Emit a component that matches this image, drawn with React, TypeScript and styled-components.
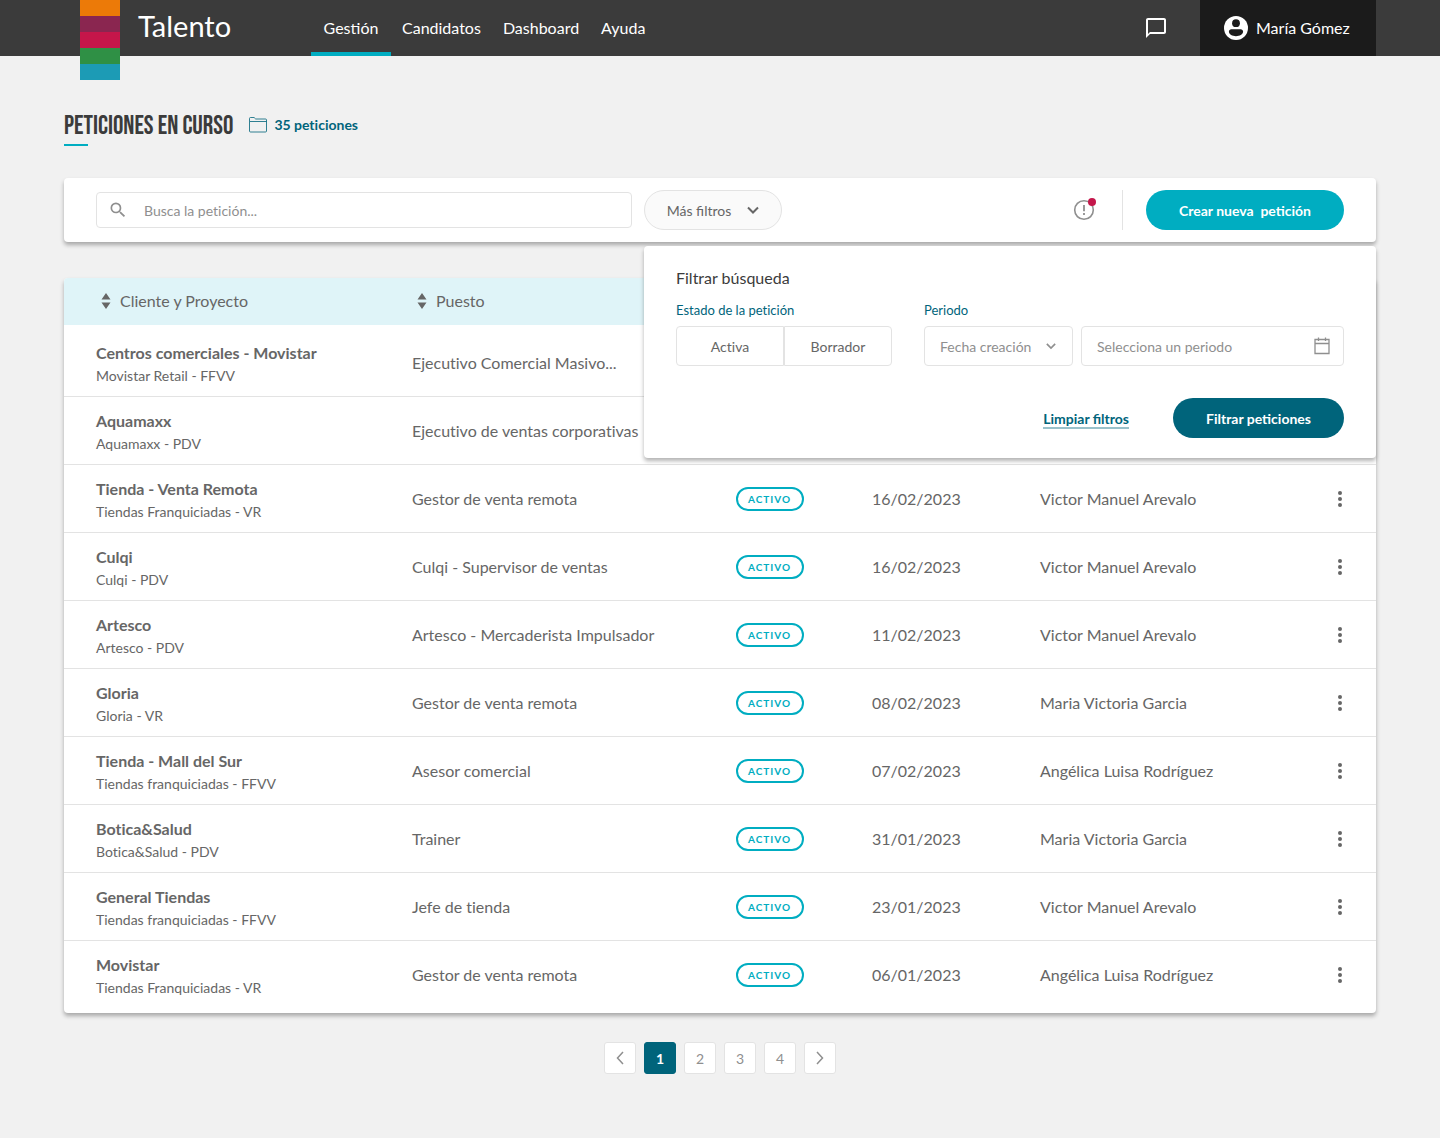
import React from "react";
import styled, { createGlobalStyle, css } from "styled-components";
import { MdChatBubbleOutline, MdSearch } from "react-icons/md";

const color = {
  page: "#f1f1f1",
  bar: "#3b3b3b",
  barDark: "#1b1b1b",
  text: "#666666",
  strong: "#3b3b3b",
  muted: "#8f8f8f",
  line: "#e3e3e3",
  teal: "#00adc1",
  petrol: "#00647b",
  tint: "#dff4f8",
  alert: "#c4174b",
};

const GlobalStyle = createGlobalStyle`
  *, *::before, *::after { box-sizing: border-box; }
  body {
    margin: 0;
    background: ${color.page};
    color: ${color.text};
    font-family: Lato, "Open Sans", sans-serif;
    font-size: 16px;
    line-height: 24px;
    font-variant-ligatures: none;
  }
  button, input, select { font: inherit; color: inherit; }
  button { cursor: pointer; }
`;

const raised = css`
  background: #fff;
  border-radius: 4px;
  box-shadow: 0 3px 4px rgba(0, 0, 0, 0.3);
`;

const ligatures = css`
  font-variant-ligatures: normal;
`;

const TopBar = styled.header`
  ${ligatures}
  display: flex;
  height: 56px;
  padding: 0 64px 0 80px;
  background: ${color.bar};
  color: #fff;
`;

const Brand = styled.a`
  display: flex;
  align-items: flex-start;
  gap: 18px;
  width: 231px;
  color: inherit;
  text-decoration: none;
`;

const Flag = styled.span`
  display: flex;
  flex-direction: column;
  flex: none;
  width: 40px;
`;

const Stripe = styled.span<{ $tone: string }>`
  height: 16px;
  background: ${(p) => p.$tone};
`;

const BrandName = styled.span`
  font-size: 29px;
  line-height: 52px;
`;

const MainNav = styled.nav`
  display: flex;
  flex: 1;
`;

const NavLink = styled.a<{ $active?: boolean }>`
  display: flex;
  align-items: center;
  justify-content: center;
  padding: 4px 11px 0;
  color: inherit;
  text-decoration: none;
  border-bottom: 4px solid transparent;
  ${(p) => p.$active && css`min-width: 80px; border-color: ${color.teal};`}
`;

const PlainButton = styled.button`
  display: inline-flex;
  align-items: center;
  justify-content: center;
  padding: 0;
  border: 0;
  background: none;
`;

const Messages = styled(PlainButton)`
  width: 24px;
  margin-right: 32px;
`;

const Account = styled(PlainButton)`
  justify-content: flex-start;
  gap: 8px;
  min-width: 176px;
  padding: 0 24px;
  background: ${color.barDark};
`;

const Page = styled.main`
  padding: 56px 64px 64px;
`;

const Heading = styled.div`
  display: flex;
  align-items: center;
  gap: 16px;
  height: 34px;
  margin-bottom: 32px;
`;

const Title = styled.h1`
  display: flex;
  flex-direction: column;
  gap: 2px;
  margin: 0;
  color: ${color.strong};
  font: 400 26px/30px "Bebas Neue", "Roboto Condensed", "Liberation Sans Narrow", sans-serif;
  text-transform: uppercase;
  white-space: nowrap;

  &::after {
    content: "";
    width: 24px;
    height: 2px;
    background: ${color.teal};
  }
`;

const Count = styled.p`
  display: flex;
  align-items: center;
  gap: 7px;
  margin: 0;
  padding-bottom: 8px;
  color: ${color.petrol};
  font-size: 14px;
  font-weight: 700;
`;

const Toolbar = styled.section`
  ${raised}
  position: relative;
  z-index: 1;
  display: flex;
  align-items: center;
  padding: 12px 32px;
  margin-bottom: 36px;
`;

const SearchBox = styled.label`
  display: flex;
  align-items: center;
  flex: 0 1 536px;
  gap: 16px;
  height: 36px;
  padding: 0 11px;
  margin-right: 12px;
  border: 1px solid ${color.line};
  border-radius: 4px;
  color: ${color.muted};
`;

const Field = styled.input`
  flex: 1;
  min-width: 0;
  padding: 2px 0 0;
  border: 0;
  outline: 0;
  background: none;
  font-size: 14px;
  &::placeholder { color: ${color.muted}; opacity: 1; }
`;

const MoreFilters = styled.button`
  ${ligatures}
  display: flex;
  align-items: center;
  justify-content: center;
  gap: 16px;
  width: 138px;
  height: 40px;
  padding: 0;
  border: 1px solid ${color.line};
  border-radius: 20px;
  background: #fafafa;
  font-size: 14px;
`;

const ButtonText = styled.span`
  padding-top: 2px;
`;

const Alerts = styled(PlainButton)`
  margin-left: auto;
`;

const Divider = styled.span`
  width: 1px;
  height: 40px;
  margin: 0 23px 0 25px;
  background: ${color.line};
`;

const PillButton = styled.button<{ $tone: string }>`
  ${ligatures}
  height: 40px;
  padding: 2px 33px 0;
  border: 0;
  border-radius: 20px;
  background: ${(p) => p.$tone};
  color: #fff;
  font-size: 14px;
  font-weight: 700;
  white-space: pre;
`;

const FilterPanel = styled.form`
  ${raised}
  position: absolute;
  top: calc(100% + 4px);
  right: 0;
  width: 732px;
  max-width: 100%;
  padding: 20px 32px;
`;

const PanelTitle = styled.h2`
  margin: 0;
  color: ${color.strong};
  font-size: 16px;
  font-weight: 400;
`;

const FilterRow = styled.div`
  display: flex;
  gap: 32px;
  margin: 10px 0 32px;
`;

const Group = styled.fieldset<{ $grow?: boolean }>`
  flex: ${(p) => (p.$grow ? "1" : "0 0 216px")};
  min-width: 0;
  margin: 0;
  padding: 0;
  border: 0;
`;

const Legend = styled.legend`
  padding: 0 0 6px;
  color: ${color.petrol};
  font-size: 13px;
  line-height: 20px;
`;

const Controls = styled.div`
  display: flex;
  gap: 8px;
`;

const Segments = styled.div`
  display: flex;
`;

const Segment = styled.button`
  flex: 1;
  height: 40px;
  padding: 2px 0 0;
  border: 1px solid ${color.line};
  background: #fff;
  font-size: 14px;
  &:first-child { border-radius: 4px 0 0 4px; }
  &:last-child { border-radius: 0 4px 4px 0; }
`;

const boxed = css`
  display: flex;
  align-items: center;
  height: 40px;
  border: 1px solid ${color.line};
  border-radius: 4px;
  color: ${color.muted};
  font-size: 14px;
`;

const SelectBox = styled.label`
  ${boxed}
  flex: 0 0 149px;
  padding: 0 16px 0 15px;
`;

const Select = styled.select`
  appearance: none;
  flex: 1;
  min-width: 0;
  padding: 2px 0 0;
  border: 0;
  outline: 0;
  background: none;
`;

const DateBox = styled.label`
  ${boxed}
  flex: 1;
  padding: 0 12px 0 15px;
`;

const PanelActions = styled.div`
  display: flex;
  align-items: center;
  justify-content: flex-end;
  gap: 44px;
`;

const ClearLink = styled.a`
  ${ligatures}
  margin-top: 2px;
  border-bottom: 2px solid #99c1ca;
  color: ${color.petrol};
  font-size: 14px;
  font-weight: 700;
  line-height: 17px;
  text-decoration: none;
`;

const TableCard = styled.section`
  ${raised}
  padding-bottom: 4px;
`;

const Table = styled.table`
  width: 100%;
  border-collapse: separate;
  border-spacing: 0;
  table-layout: fixed;
  text-align: left;
`;

const Col = styled.col<{ $width?: number }>`
  ${(p) => p.$width && `width: ${p.$width}px;`}
`;

const HeadCell = styled.th`
  height: 47px;
  padding: 0;
  background: ${color.tint};
  font-weight: 400;
  &:first-child { padding-left: 32px; border-top-left-radius: 4px; }
  &:last-child { border-top-right-radius: 4px; }
`;

const SortButton = styled(PlainButton)`
  gap: 8px;
  padding-left: 4px;
`;

const Row = styled.tr``;

const Cell = styled.td`
  height: 68px;
  padding: 0;
  border-bottom: 1px solid ${color.line};
  white-space: nowrap;
  &:first-child { padding: 2px 0 0 32px; }
  &:last-child { padding-right: 26px; text-align: right; }
  ${Row}:first-child & { height: 72px; padding-top: 4px; }
  ${Row}:first-child &:first-child { padding-top: 6px; }
  ${Row}:last-child & { border-bottom-color: transparent; }
`;

const Client = styled.strong`
  display: block;
  font-weight: 700;
`;

const Project = styled.span`
  display: block;
  font-size: 14px;
  line-height: 22px;
`;

const Badge = styled.span`
  display: inline-flex;
  align-items: center;
  height: 24px;
  padding: 0 11px 0 10px;
  border: 2px solid ${color.teal};
  border-radius: 12px;
  color: ${color.teal};
  font-size: 10px;
  font-weight: 700;
  letter-spacing: 1px;
  vertical-align: middle;
`;

const RowMenu = styled(PlainButton)`
  width: 20px;
  height: 24px;
  vertical-align: middle;
`;

const Pagination = styled.nav`
  display: flex;
  justify-content: center;
  gap: 8px;
  margin-top: 29px;
`;

const PageButton = styled.button<{ $active?: boolean }>`
  display: flex;
  align-items: center;
  justify-content: center;
  width: 32px;
  height: 32px;
  padding: 0;
  border: 1px solid ${(p) => (p.$active ? color.petrol : color.line)};
  border-radius: 3px;
  background: ${(p) => (p.$active ? color.petrol : "#fff")};
  color: ${(p) => (p.$active ? "#fff" : color.muted)};
  font-size: 14px;
  font-weight: ${(p) => (p.$active ? 700 : 400)};
`;

const UserIcon = () => (
  <svg width="24" height="24" viewBox="0 0 24 24" aria-hidden="true">
    <circle cx="12" cy="12" r="12" fill="#fff" />
    <circle cx="12" cy="7.2" r="3.9" fill={color.barDark} />
    <path d="M7.4 13.2h9.2c1.5 0 2.5 1 2.500 2.400 0 2.800-3.500 4.700-7.100 4.700s-7.100-1.900-7.100-4.700c0-1.400 1-2.400 2.500-2.400z" fill={color.barDark} />
  </svg>
);

const FolderIcon = () => (
  <svg width="18" height="16" viewBox="0 0 18 16" fill="none" stroke={color.petrol} aria-hidden="true">
    <path d="M.5 4.500V1.500a1 1 0 0 1 1-1h3.600l1.600 1.500h9.800a1 1 0 0 1 1 1V14a1 1 0 0 1-1 1h-15a1 1 0 0 1-1-1zM.5 4.500h17" opacity=".8" />
  </svg>
);

const Chevron = ({ size, weight }: { size: number; weight: number }) => (
  <svg width={size} height={size} viewBox="0 0 12 12" fill="none" stroke="currentColor" strokeWidth={weight} aria-hidden="true">
    <path d="M1 3.500 6 8.500 11 3.500" />
  </svg>
);

const AlertIcon = () => (
  <svg width="24" height="24" viewBox="0 0 24 24" fill="none" aria-hidden="true">
    <circle cx="11" cy="12" r="9.300" stroke={color.muted} strokeWidth="1.600" />
    <path d="M11 7v6.200M11 15v2" stroke={color.muted} strokeWidth="1.800" />
    <circle cx="19" cy="4" r="4" fill={color.alert} />
  </svg>
);

const CalendarIcon = () => (
  <svg width="18" height="20" viewBox="0 0 18 20" fill="none" stroke={color.muted} aria-hidden="true">
    <path d="M2 3.500h14v14H2zM2 7.500h14M5.500 1.500v3.500M12.500 1.500v3.500" strokeWidth="1.300" />
  </svg>
);

const SortIcon = () => (
  <svg width="12" height="16" viewBox="0 0 12 16" fill={color.text} aria-hidden="true">
    <path d="M6 0l4.500 6.500h-9zM6 16l4.500-6.500h-9z" />
  </svg>
);

const DotsIcon = () => (
  <svg width="4" height="16" viewBox="0 0 4 16" fill={color.text} aria-hidden="true">
    <circle cx="2" cy="2" r="2" />
    <circle cx="2" cy="8" r="2" />
    <circle cx="2" cy="14" r="2" />
  </svg>
);

const ArrowIcon = ({ next }: { next?: boolean }) => (
  <svg width="8" height="14" viewBox="0 0 8 14" fill="none" stroke="currentColor" strokeWidth="1.500" aria-hidden="true">
    <path d={next ? "M1 1l5.500 6L1 13" : "M7 1L1.500 7 7 13"} />
  </svg>
);

const stripes = ["#ec7a08", "#8a2650", "#c5164a", "#2f9045", "#1c9bb5"];
const sections = ["Gestión", "Candidatos", "Dashboard", "Ayuda"];

const victor = "Victor Manuel Arevalo";
const maria = "Maria Victoria Garcia";
const angelica = "Angélica Luisa Rodríguez";

type Request = { client: string; project: string; job: string; date?: string; owner?: string };

const requests: Request[] = [
  { client: "Centros comerciales - Movistar", project: "Movistar Retail - FFVV", job: "Ejecutivo Comercial Masivo..." },
  { client: "Aquamaxx", project: "Aquamaxx - PDV", job: "Ejecutivo de ventas corporativas" },
  { client: "Tienda - Venta Remota", project: "Tiendas Franquiciadas - VR", job: "Gestor de venta remota", date: "16/02/2023", owner: victor },
  { client: "Culqi", project: "Culqi - PDV", job: "Culqi - Supervisor de ventas", date: "16/02/2023", owner: victor },
  { client: "Artesco", project: "Artesco - PDV", job: "Artesco - Mercaderista Impulsador", date: "11/02/2023", owner: victor },
  { client: "Gloria", project: "Gloria - VR", job: "Gestor de venta remota", date: "08/02/2023", owner: maria },
  { client: "Tienda - Mall del Sur", project: "Tiendas franquiciadas - FFVV", job: "Asesor comercial", date: "07/02/2023", owner: angelica },
  { client: "Botica&Salud", project: "Botica&Salud - PDV", job: "Trainer", date: "31/01/2023", owner: maria },
  { client: "General Tiendas", project: "Tiendas franquiciadas - FFVV", job: "Jefe de tienda", date: "23/01/2023", owner: victor },
  { client: "Movistar", project: "Tiendas Franquiciadas - VR", job: "Gestor de venta remota", date: "06/01/2023", owner: angelica },
];

export default function App() {
  return (
    <>
      <GlobalStyle />
      <TopBar>
        <Brand href="#">
          <Flag>{stripes.map((tone) => <Stripe key={tone} $tone={tone} />)}</Flag>
          <BrandName>Talento</BrandName>
        </Brand>
        <MainNav>
          {sections.map((name, i) => (
            <NavLink key={name} href="#" $active={i === 0}>{name}</NavLink>
          ))}
        </MainNav>
        <Messages aria-label="Mensajes"><MdChatBubbleOutline size={24} /></Messages>
        <Account><UserIcon />María Gómez</Account>
      </TopBar>

      <Page>
        <Heading>
          <Title>Peticiones en curso</Title>
          <Count><FolderIcon />35 peticiones</Count>
        </Heading>

        <Toolbar>
          <SearchBox>
            <MdSearch size={20} />
            <Field type="search" aria-label="Buscar" placeholder="Busca la petición..." />
          </SearchBox>
          <MoreFilters aria-expanded="true">
            <ButtonText>Más filtros</ButtonText>
            <Chevron size={12} weight={2} />
          </MoreFilters>
          <Alerts aria-label="Avisos"><AlertIcon /></Alerts>
          <Divider />
          <PillButton $tone={color.teal}>{"Crear nueva  petición"}</PillButton>

          <FilterPanel>
            <PanelTitle>Filtrar búsqueda</PanelTitle>
            <FilterRow>
              <Group>
                <Legend>Estado de la petición</Legend>
                <Segments>
                  <Segment type="button">Activa</Segment>
                  <Segment type="button">Borrador</Segment>
                </Segments>
              </Group>
              <Group $grow>
                <Legend>Periodo</Legend>
                <Controls>
                  <SelectBox>
                    <Select aria-label="Tipo de fecha"><option>Fecha creación</option></Select>
                    <Chevron size={10} weight={2} />
                  </SelectBox>
                  <DateBox>
                    <Field aria-label="Periodo" placeholder="Selecciona un periodo" />
                    <CalendarIcon />
                  </DateBox>
                </Controls>
              </Group>
            </FilterRow>
            <PanelActions>
              <ClearLink href="#">Limpiar filtros</ClearLink>
              <PillButton type="button" $tone={color.petrol}>Filtrar peticiones</PillButton>
            </PanelActions>
          </FilterPanel>
        </Toolbar>

        <TableCard>
          <Table>
            <colgroup>
              <Col $width={348} />
              <Col $width={324} />
              <Col $width={136} />
              <Col $width={168} />
              <Col />
              <Col $width={68} />
            </colgroup>
            <thead>
              <tr>
                <HeadCell><SortButton><SortIcon />Cliente y Proyecto</SortButton></HeadCell>
                <HeadCell><SortButton><SortIcon />Puesto</SortButton></HeadCell>
                <HeadCell />
                <HeadCell />
                <HeadCell />
                <HeadCell />
              </tr>
            </thead>
            <tbody>
              {requests.map(({ client, project, job, date, owner }) => (
                <Row key={client}>
                  <Cell><Client>{client}</Client><Project>{project}</Project></Cell>
                  <Cell>{job}</Cell>
                  <Cell>{date && <Badge>ACTIVO</Badge>}</Cell>
                  <Cell>{date}</Cell>
                  <Cell>{owner}</Cell>
                  <Cell>{owner && <RowMenu aria-label={`Opciones de ${client}`}><DotsIcon /></RowMenu>}</Cell>
                </Row>
              ))}
            </tbody>
          </Table>
        </TableCard>

        <Pagination aria-label="Paginación">
          <PageButton aria-label="Anterior"><ArrowIcon /></PageButton>
          {[1, 2, 3, 4].map((n) => (
            <PageButton key={n} $active={n === 1}><ButtonText>{n}</ButtonText></PageButton>
          ))}
          <PageButton aria-label="Siguiente"><ArrowIcon next /></PageButton>
        </Pagination>
      </Page>
    </>
  );
}
